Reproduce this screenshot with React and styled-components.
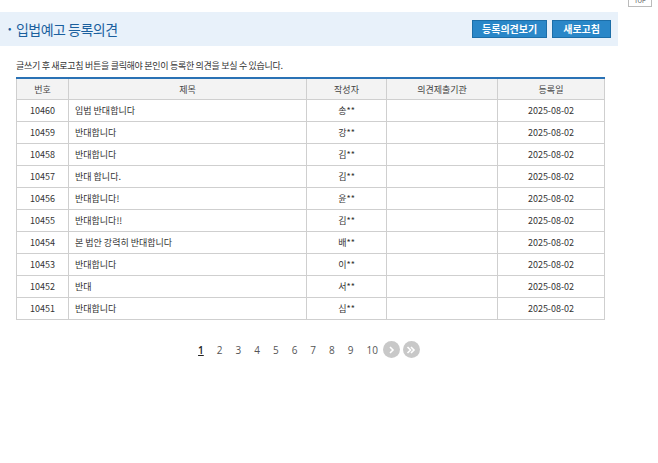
import React from 'react';
import styled, { createGlobalStyle } from 'styled-components';

const Global = createGlobalStyle`
  body { margin: 0; font-family: "Noto Sans CJK KR", "Noto Sans", sans-serif; background: #fff; color: #333; }
`;

const Page = styled.div`
  position: relative;
  width: 658px;
  height: 463px;
  padding-top: 12px;
  box-sizing: border-box;
`;

const TopBtn = styled.div`
  position: absolute;
  right: 6px;
  top: 0;
  width: 22px;
  height: 6px;
  border: 1px solid #bbb;
  border-top: none;
  background: #fff;
  font-size: 6px;
  text-align: center;
  line-height: 1px;
  overflow: hidden;
  color: #555;
`;

const Header = styled.div`
  width: 618px;
  height: 34px;
  background: #e8f1fa;
  display: flex;
  align-items: center;
  justify-content: space-between;
  padding: 0 7px 0 8px;
  box-sizing: border-box;
`;

const Title = styled.h2`
  margin: 0;
  font-size: 14px;
  font-weight: 400;
  color: #1a5f9e;
  letter-spacing: -0.5px;
  &::before { content: "•"; font-size: 10px; margin-right: 5px; vertical-align: 3px; }
`;

const Buttons = styled.div`
  display: flex;
  gap: 5px;
`;

const Button = styled.button`
  height: 18px;
  padding: 0 ${p => p.$pad}px;
  background: #2a87c8;
  color: #fff;
  border: 1px solid #1c6ea8;
  font-family: inherit;
  font-size: 10px;
  font-weight: 700;
  line-height: 16px;
`;

const Notice = styled.p`
  margin: 13px 0 0 16px;
  font-size: 9px;
  color: #333;
  letter-spacing: -0.3px;
`;

const Table = styled.table`
  margin: 5px 0 0 16px;
  width: 588px;
  border-collapse: collapse;
  border-top: 2px solid #2a72b5;
  font-size: 9px;
  table-layout: fixed;
`;

const Th = styled.th`
  height: 20px;
  background: #f3f3f3;
  font-weight: 400;
  color: #444;
  border: 1px solid #cfcfcf;
  border-top: none;
  padding: 0;
`;

const Td = styled.td`
  height: 21px;
  border: 1px solid #cfcfcf;
  text-align: ${p => p.$left ? 'left' : 'center'};
  padding: ${p => p.$left ? '0 0 0 6px' : '0'};
  color: #333;
`;

const Pager = styled.div`
  display: flex;
  justify-content: center;
  align-items: center;
  gap: 13px;
  margin: 21px 0 0 0;
  width: 618px;
  font-family: "Open Sans", sans-serif;
  font-size: 10px;
  color: #555;
`;

const PageNum = styled.span`
  text-decoration: ${p => p.$active ? 'underline' : 'none'};
  color: ${p => p.$active ? '#222' : '#555'};
  font-weight: ${p => p.$active ? 600 : 400};
`;

const Arrows = styled.div`
  display: flex;
  gap: 3px;
  margin-left: -8px;
`;

const Circle = styled.span`
  width: 17px;
  height: 17px;
  border-radius: 50%;
  background: #c8c8c8;
  display: flex;
  align-items: center;
  justify-content: center;
`;

const rows = [
  ['10460', '입법 반대합니다', '송**'],
  ['10459', '반대합니다', '강**'],
  ['10458', '반대합니다', '김**'],
  ['10457', '반대 합니다.', '김**'],
  ['10456', '반대합니다!', '윤**'],
  ['10455', '반대합니다!!', '김**'],
  ['10454', '본 법안 강력히 반대합니다', '배**'],
  ['10453', '반대합니다', '이**'],
  ['10452', '반대', '서**'],
  ['10451', '반대합니다', '심**'],
];

export default function App() {
  return (
    <Page>
      <Global />
      <TopBtn>TOP</TopBtn>
      <Header>
        <Title>입법예고 등록의견</Title>
        <Buttons>
          <Button $pad={9}>등록의견보기</Button>
          <Button $pad={10}>새로고침</Button>
        </Buttons>
      </Header>
      <Notice>글쓰기 후 새로고침 버튼을 클릭해야 본인이 등록한 의견을 보실 수 있습니다.</Notice>
      <Table>
        <colgroup>
          <col style={{ width: 52 }} />
          <col style={{ width: 238 }} />
          <col style={{ width: 80 }} />
          <col style={{ width: 111 }} />
          <col style={{ width: 107 }} />
        </colgroup>
        <thead>
          <tr><Th>번호</Th><Th>제목</Th><Th>작성자</Th><Th>의견제출기관</Th><Th>등록일</Th></tr>
        </thead>
        <tbody>
          {rows.map(r => (
            <tr key={r[0]}>
              <Td>{r[0]}</Td>
              <Td $left>{r[1]}</Td>
              <Td>{r[2]}</Td>
              <Td></Td>
              <Td>2025-08-02</Td>
            </tr>
          ))}
        </tbody>
      </Table>
      <Pager>
        {[1,2,3,4,5,6,7,8,9,10].map(n => <PageNum key={n} $active={n === 1}>{n}</PageNum>)}
        <Arrows>
          <Circle>
            <svg width="8" height="8" viewBox="0 0 8 8"><path d="M3 1l3 3-3 3" stroke="#fff" strokeWidth="1.6" fill="none" /></svg>
          </Circle>
          <Circle>
            <svg width="10" height="8" viewBox="0 0 10 8"><path d="M1.5 1l3 3-3 3M5 1l3 3-3 3" stroke="#fff" strokeWidth="1.6" fill="none" /></svg>
          </Circle>
        </Arrows>
      </Pager>
    </Page>
  );
}
